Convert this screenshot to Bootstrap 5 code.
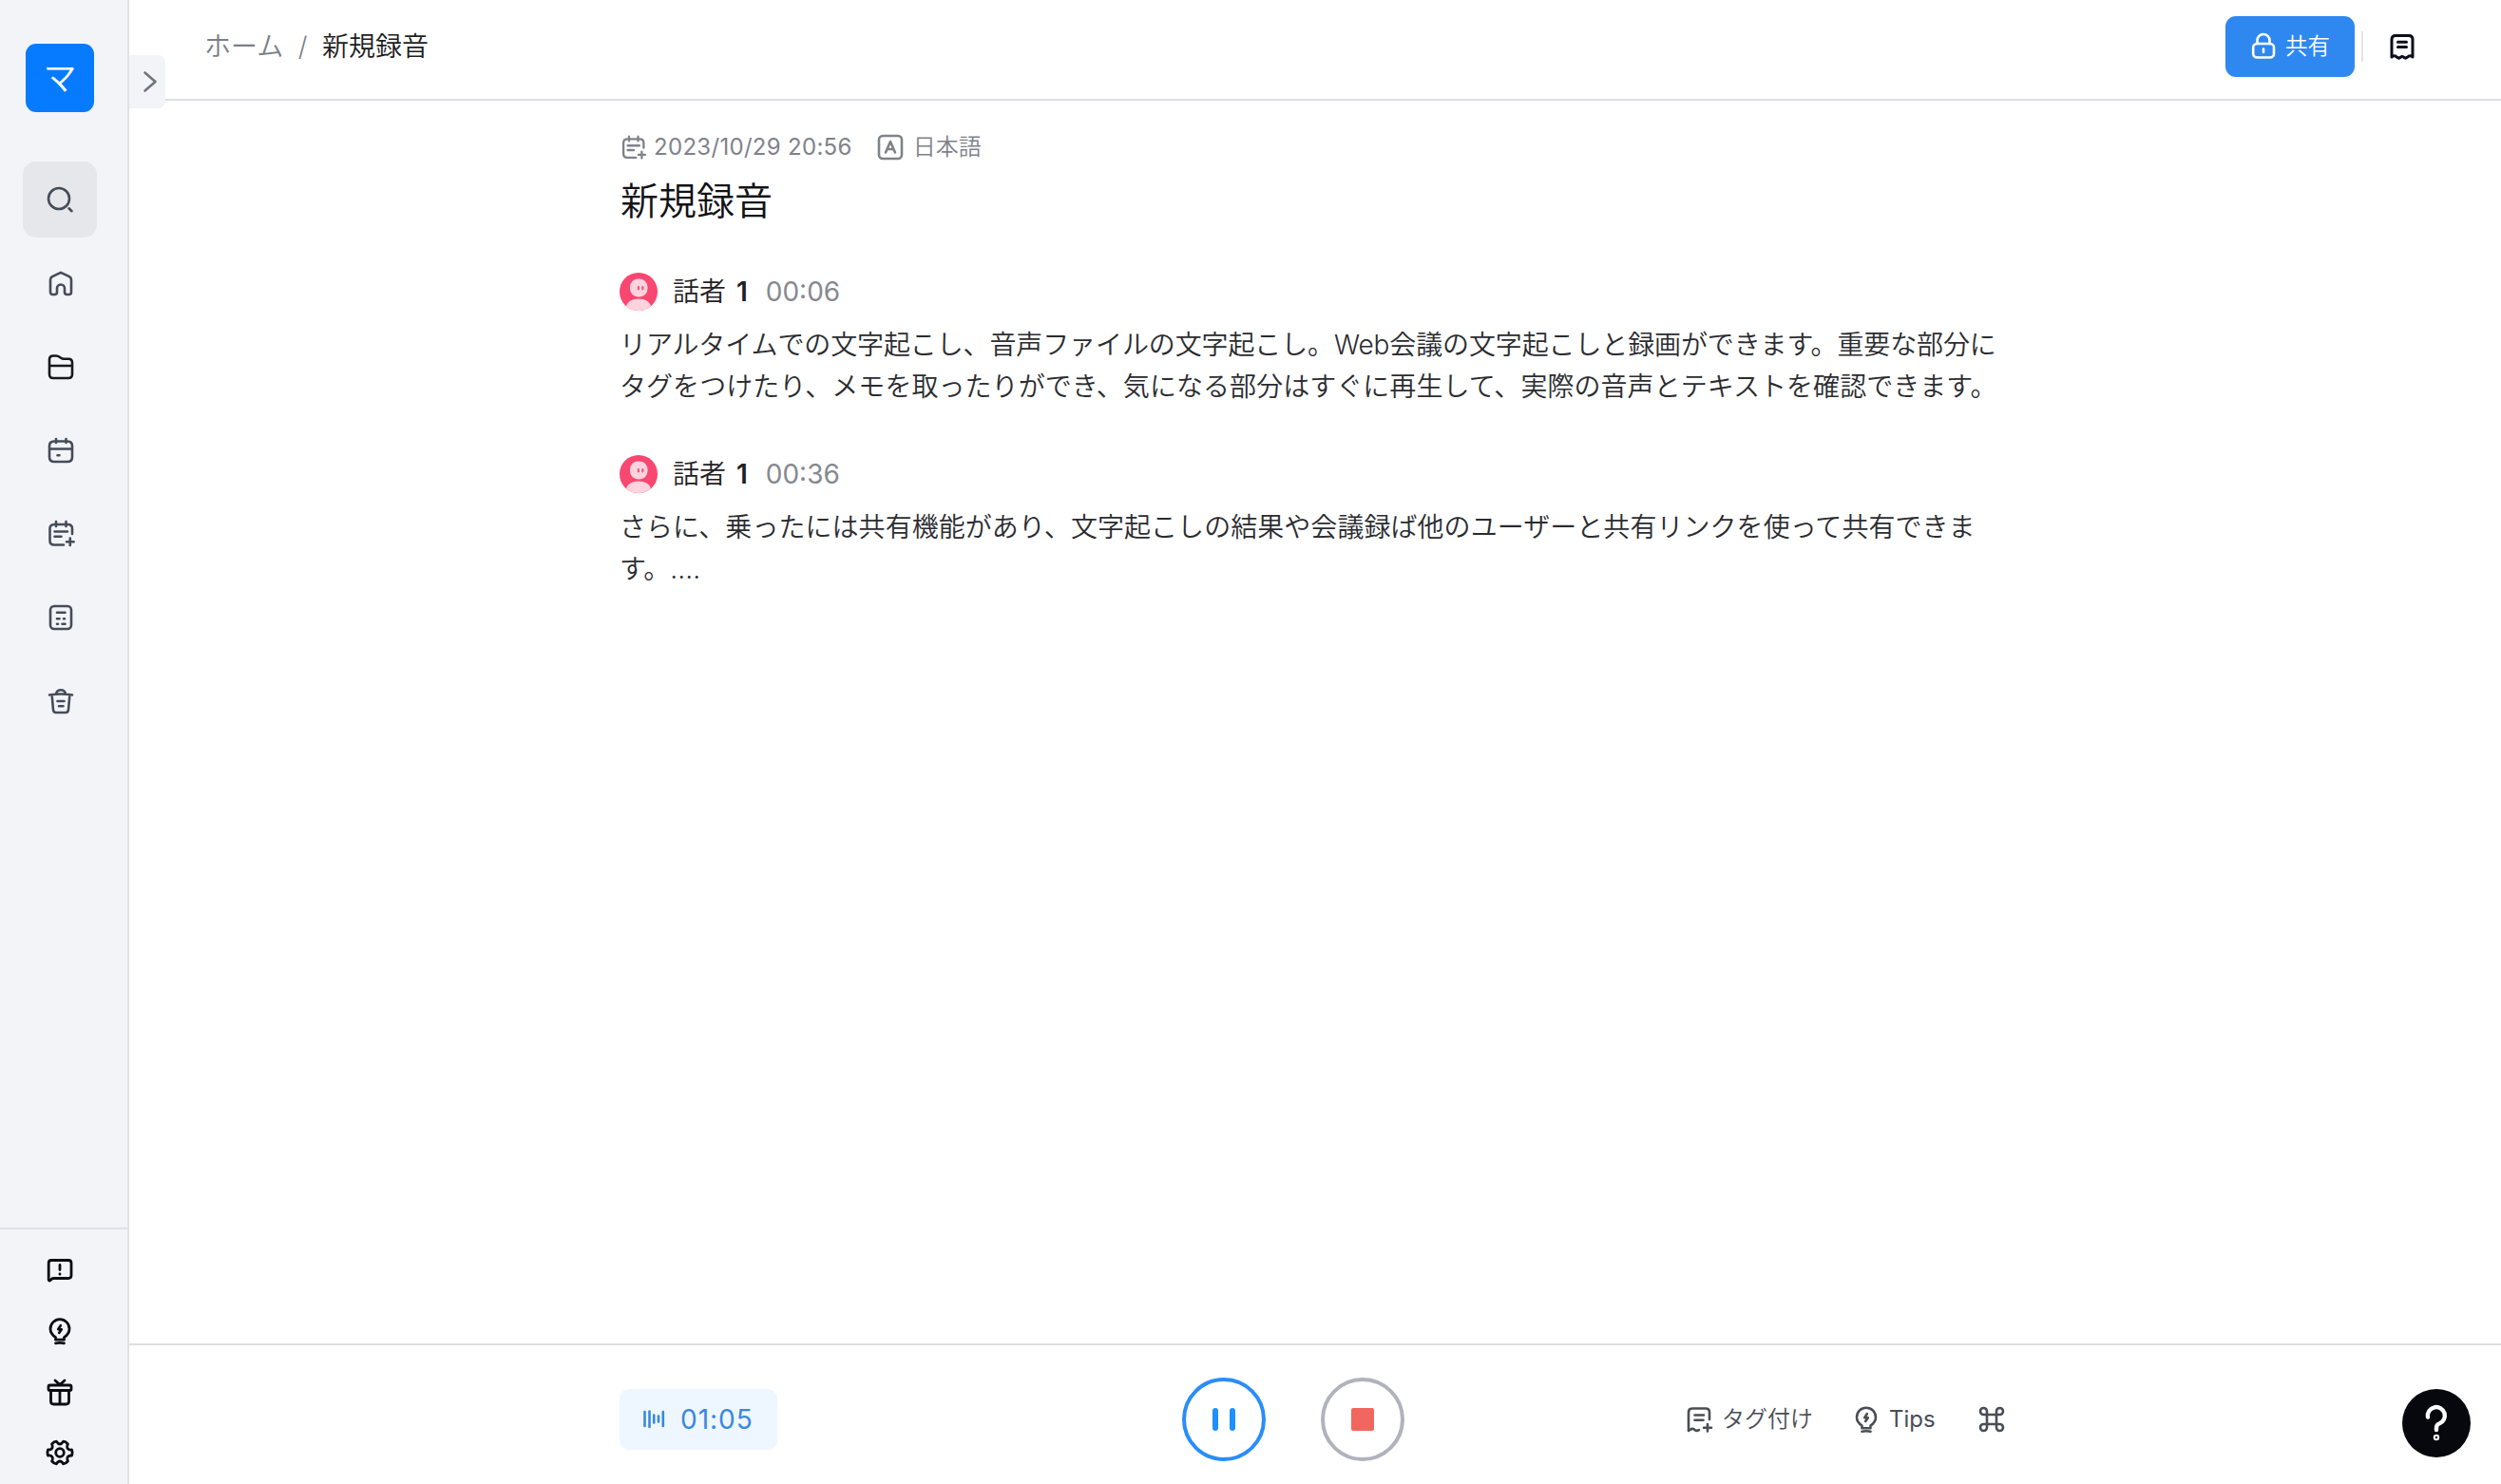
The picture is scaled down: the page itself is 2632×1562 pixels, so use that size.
<!DOCTYPE html>
<html lang="ja">
<head>
    <meta charset="UTF-8">
    <meta name="viewport" content="width=device-width, initial-scale=1.0">
    <title>新規録音</title>
    <link href="https://cdn.jsdelivr.net/npm/bootstrap@5.3.0/dist/css/bootstrap.min.css" rel="stylesheet">
    <style>
        body {
            font-family: Inter, "Noto Sans CJK JP", sans-serif;
            font-size: 28px;
            font-weight: 350;
            line-height: 44px;
            color: #2b2c30;
        }
        svg {
            display: block;
            flex: none;
            fill: none;
            stroke: currentColor;
            stroke-width: 2.6;
            stroke-linecap: round;
            stroke-linejoin: round;
        }
        .latin {
            font-weight: 400;
        }

        /* Sidebar */
        .sidebar {
            width: 136px;
            background: #f2f4f8;
            border-right: 2px solid #dfe1e6;
            color: #454c59;
        }
        .logo {
            width: 72px;
            height: 72px;
            margin: 46px 0 52px 27px;
            border-radius: 11px;
            background: #067bff;
            color: #fff;
            font-size: 35px;
        }
        .side-nav {
            gap: 8px;
            padding-left: 24px;
        }
        .side-link {
            width: 80px;
            height: 80px;
            border-radius: 14px;
            color: inherit;
        }
        .side-link.current {
            width: 78px;
            background: #e6e7eb;
        }
        .side-link.dark {
            color: #17181c;
        }
        .side-foot {
            border-top: 2px solid #dfe1e6;
            height: 270px;
            padding: 27px 0 0 47px;
            gap: 32px;
            color: #0a0c12;
        }
        .side-foot svg {
            stroke-width: 2.8;
        }
        .toggle {
            position: absolute;
            left: 136px;
            top: 58px;
            width: 38px;
            height: 56px;
            border-radius: 0 8px 8px 0;
            background: #f2f4f8;
            color: #6f747d;
        }

        /* Header */
        .topbar {
            height: 106px;
            border-bottom: 2px solid #dedfe2;
            padding: 17px 88px 23px 79px;
        }
        .crumbs {
            --bs-breadcrumb-divider-color: #7c7f87;
            --bs-breadcrumb-item-padding-x: 15.5px;
            --bs-breadcrumb-item-active-color: #1c1d21;
        }
        .crumbs a {
            color: #7c7f87;
        }
        .btn-share {
            --bs-btn-bg: #2f88f0;
            --bs-btn-border-width: 0;
            --bs-btn-color: #fff;
            width: 136px;
            height: 64px;
            border-radius: 11px;
            font-size: 23.5px;
            font-weight: 350;
            gap: 7px;
            padding: 0 0 0 24px;
        }
        .bar-line {
            width: 2px;
            height: 32px;
            margin: 0 25px 0 7px;
            background: #e4e5e7;
        }
        .note-icon {
            color: #0c0e1a;
            stroke-width: 3;
        }

        /* Transcript */
        .column {
            width: 1464px;
            margin-left: 516px;
        }
        .meta {
            height: 44px;
            margin-top: 27px;
            font-size: 24px;
            color: #7f828a;
        }
        .meta .latin {
            margin-left: 7px;
            letter-spacing: .3px;
        }
        .title {
            font-size: 40px;
            font-weight: 350;
            line-height: 60px;
            margin: 5px 0 45px 1px;
            color: #111216;
        }
        .speaker {
            height: 40px;
            margin-bottom: 14px;
            color: #1f2024;
        }
        .speaker-no {
            margin-left: 3px;
            font-weight: 600;
        }
        .time {
            margin-left: 19px;
            color: #868990;
        }
        .speech {
            margin-bottom: 50px;
            white-space: nowrap;
            letter-spacing: .05px;
        }
        .snug {
            letter-spacing: -.12px;
        }

        /* Recorder */
        .recorder {
            height: 148px;
            border-top: 2px solid #dedfe2;
            padding-top: 10px;
        }
        .timer {
            width: 166px;
            height: 64px;
            border-radius: 10px;
            padding-left: 20px;
            gap: 12px;
            background: #eef7ff;
            color: #3a87e0;
            letter-spacing: 1px;
        }
        .round-btn {
            width: 88px;
            height: 88px;
            border: 4px solid #b0b3bc;
        }
        .pause-btn {
            border-color: #2a8dfa;
            gap: 12px;
            margin: 0 58px 0 426px;
        }
        .pause-btn span {
            width: 6px;
            height: 24px;
            border-radius: 3px;
            background: #1e90ff;
        }
        .stop-btn span {
            width: 24px;
            height: 24px;
            border-radius: 2px;
            background: #f26660;
        }
        .tools {
            margin-left: 294px;
            font-size: 24px;
            color: #4a4d55;
        }
        .tips-icon {
            margin-left: 40px;
        }
        .cmd-icon {
            margin-left: 43px;
        }
        .help {
            position: absolute;
            left: 2528px;
            top: 1462px;
            width: 72px;
            height: 72px;
            background: #06080e;
            color: #fff;
        }
        .help svg {
            stroke-width: 4.4;
        }
    </style>
</head>
<body>
    <!-- Shapes used more than once -->
    <svg width="0" height="0" class="position-absolute">
        <symbol id="calendarPlus" viewBox="0 0 32 32">
            <path d="M28 16V10.5Q28 6 23.500 6H9Q4.500 6 4.500 10.500V23Q4.500 27.500 9 27.500H19M11 3V8M21.500 3V8M9.500 13.500H23M9.500 18.800H16.500M25.800 20.500V28M22 24.200H29.600"/>
        </symbol>
        <symbol id="bulb" viewBox="0 0 32 32">
            <path d="M11.500 25.200V22.600C8.500 20.500 6 18 6 13.700A10 10 0 0 1 26 13.700C26 18 23.500 20.500 20.500 22.600V25.200ZM11.500 28.800Q16 27.800 20.500 28.800"/>
            <path d="M16.800 10.200L14.200 14.200H17.800L15.200 18" stroke-width="2.600"/>
        </symbol>
        <symbol id="avatar" viewBox="0 0 40 40">
            <g stroke="none">
                <circle cx="20" cy="20" r="20" fill="#f84770"/>
                <path d="M7 35.200C8.500 30.500 13 27.600 20 27.600S31.500 30.500 33 35.200A20 20 0 0 1 7 35.200Z" fill="#ffd3dd"/>
                <rect x="11" y="6.500" width="18.500" height="19" rx="8.500" fill="#ffd3dd"/>
                <rect x="18.800" y="14" width="2.200" height="4.400" rx="1.100" fill="#f0567b"/>
                <rect x="23.200" y="14" width="2.200" height="4.400" rx="1.100" fill="#f0567b"/>
            </g>
        </symbol>
    </svg>

    <div class="d-flex vh-100 overflow-hidden">
        <aside class="sidebar d-flex flex-column flex-shrink-0">
            <div class="logo d-flex align-items-center justify-content-center">マ</div>
            <nav class="side-nav d-flex flex-column">
                <a class="side-link current d-flex align-items-center justify-content-center">
                    <svg width="32" height="32"><circle cx="15" cy="15" r="11"/><path d="M25.500 25.300L28.500 28.200"/></svg>
                </a>
                <a class="side-link d-flex align-items-center justify-content-center">
                    <svg width="32" height="32"><path d="M16 4.800L25 9.200Q27 10.300 27 12.500V25.500Q27 28 24.500 28H22.500Q20 28 20 25.500V21.500A4 4 0 0 0 12 21.500V25.500Q12 28 9.500 28H7.500Q5 28 5 25.500V12.500Q5 10.300 7 9.200Z"/></svg>
                </a>
                <a class="side-link dark d-flex align-items-center justify-content-center">
                    <svg width="32" height="32"><path d="M4 15V8.500Q4 4.500 8 4.500H11Q13 4.500 15 6L16.500 7Q17.500 7.700 19 7.700H24Q28 7.700 28 11.700V24Q28 28 24 28H8Q4 28 4 24V15H28"/></svg>
                </a>
                <a class="side-link d-flex align-items-center justify-content-center">
                    <svg width="32" height="32"><path d="M9 6.500H23Q28 6.500 28 11.500V23Q28 28 23 28H9Q4 28 4 23V11.500Q4 6.500 9 6.500ZM4 14.500H28M11 4V8M21.500 4V8M12.500 21.300H14.500"/></svg>
                </a>
                <a class="side-link d-flex align-items-center justify-content-center">
                    <svg width="32" height="32"><use href="#calendarPlus"/></svg>
                </a>
                <a class="side-link d-flex align-items-center justify-content-center">
                    <svg width="32" height="32"><rect x="5" y="4" width="22" height="24" rx="4"/><path d="M12 10.700H20.500M12 17.200H14.500M19 17.200H20M12 22.800H13M17.500 22.800H20.500"/></svg>
                </a>
                <a class="side-link d-flex align-items-center justify-content-center">
                    <svg width="32" height="32"><path d="M4 9.500Q16 7.500 28 9.500M11 8Q12 4.200 16 4.200T21 8M6.800 11.500L8 25Q8.200 28 11 28H21Q23.800 28 24 25L25.200 11.500M12.500 16H19.500M14 21.300H18.500"/></svg>
                </a>
            </nav>
            <div class="side-foot d-flex flex-column mt-auto">
                <svg width="32" height="32"><path d="M7 5.500H25Q28 5.500 28 8.500V21.500Q28 24.500 25 24.500H9.500Q7.500 24.500 6.500 26.200Q5 28 4.200 26V8.500Q4.200 5.500 7 5.500ZM16 10.500V15.500M16 20V20.200"/></svg>
                <svg width="32" height="32"><use href="#bulb"/></svg>
                <svg width="32" height="32"><path d="M5.500 9H26.500Q28 9 28 10.500V13Q28 14.500 26.500 14.500H5.500Q4 14.500 4 13V10.500Q4 9 5.500 9ZM6.500 14.500V26Q6.500 29 9.500 29H22.500Q25.500 29 25.500 26V14.500M16 14.500V29M11 4L16 8.500L21 4"/></svg>
                <svg width="32" height="32"><circle cx="16" cy="16" r="4.300"/><path d="M12.400 4.200Q14.200 7 16 7T19.600 4.200Q22 4.200 24.400 7Q23 10 24.200 11.700T28.500 13Q29.600 16 28.500 19Q25 19.200 24.200 20.700T24.400 25Q22 27.800 19.600 27.800Q18 25 16 25T12.400 27.800Q10 27.800 7.600 25Q9 22 7.800 20.300T3.500 19Q2.400 16 3.500 13Q7 12.800 7.800 11.300T7.600 7Q10 4.200 12.400 4.200Z"/></svg>
            </div>
        </aside>

        <main class="d-flex flex-column flex-grow-1">
            <header class="topbar d-flex align-items-center">
                <ol class="breadcrumb crumbs mb-0 me-auto">
                    <li class="breadcrumb-item"><a class="text-decoration-none">ホーム</a></li>
                    <li class="breadcrumb-item active">新規録音</li>
                </ol>
                <button class="btn btn-share d-flex align-items-center">
                    <svg width="32" height="32"><rect x="5.200" y="13" width="21.800" height="14.500" rx="4"/><path d="M9.500 13V9.500A6.500 6.500 0 0 1 22.500 9.500V13M16 18.500V22"/></svg>
                    共有
                </button>
                <div class="bar-line"></div>
                <svg class="note-icon" width="32" height="32"><path d="M5 27V8.500Q5 4.500 9 4.500H23Q27 4.500 27 8.500V27Q24 24.500 21.500 27.200Q19.500 29 17.500 27.200Q16 25.800 14.500 27.200Q12.500 29 10.500 27.200Q8 24.500 5 27ZM11.500 11.200H20.500M11.500 16.500H20.500"/></svg>
            </header>

            <section class="column flex-grow-1">
                <div class="meta d-flex align-items-center">
                    <svg width="29" height="29"><use href="#calendarPlus"/></svg>
                    <span class="latin">2023/10/29 20:56</span>
                    <svg class="ms-4" width="32" height="32"><rect x="4" y="4" width="24" height="24" rx="4"/><path d="M11 21.500L16 10L21 21.500M12.800 18H19.200"/></svg>
                    <span class="ms-2">日本語</span>
                </div>
                <h1 class="title">新規録音</h1>

                <div class="speaker d-flex align-items-center">
                    <svg width="40" height="40"><use href="#avatar"/></svg>
                    <span class="ms-3">話者 <span class="speaker-no">1</span></span>
                    <span class="time latin">00:06</span>
                </div>
                <p class="speech"><span class="snug">リアルタイムでの文字起こし、音声ファイルの文字起こし。Web会議の文字起こしと録画ができます。重要な部分に</span><br>タグをつけたり、メモを取ったりができ、気になる部分はすぐに再生して、実際の音声とテキストを確認できます。</p>

                <div class="speaker d-flex align-items-center">
                    <svg width="40" height="40"><use href="#avatar"/></svg>
                    <span class="ms-3">話者 <span class="speaker-no">1</span></span>
                    <span class="time latin">00:36</span>
                </div>
                <p class="speech">さらに、乗ったには共有機能があり、文字起こしの結果や会議録ば他のユーザーと共有リンクを使って共有できま<br>す。....</p>
            </section>

            <footer class="recorder">
                <div class="column d-flex align-items-center h-100">
                    <div class="timer latin d-flex align-items-center">
                        <svg width="32" height="32"><path d="M6.500 8V23M11.500 7.500V24M16.200 11.500V19.500M21 12.500V18.500M25.800 8V23"/></svg>
                        <span>01:05</span>
                    </div>
                    <div class="round-btn pause-btn rounded-circle d-flex align-items-center justify-content-center"><span></span><span></span></div>
                    <div class="round-btn stop-btn rounded-circle d-flex align-items-center justify-content-center"><span></span></div>
                    <div class="tools d-flex align-items-center">
                        <svg width="32" height="32"><path d="M27 16V8.500Q27 4.500 23 4.500H9Q5 4.500 5 8.500V28Q8.500 25 10.500 26.200Q13 29 16 27.200M11.500 11.500H21M11.500 16.800H20.500M25 21V28.500M21 24.700H29"/></svg>
                        <span class="ms-2">タグ付け</span>
                        <svg class="tips-icon" width="32" height="32"><use href="#bulb"/></svg>
                        <span class="latin ms-2">Tips</span>
                        <svg class="cmd-icon" width="32" height="32"><path d="M11 11H21V21H11ZM11 11V7.500A3.500 3.500 0 1 0 7.500 11H11M21 11H24.500A3.500 3.500 0 1 0 21 7.500V11M21 21V24.500A3.500 3.500 0 1 0 24.500 21H21M11 21H7.500A3.500 3.500 0 1 0 11 24.500V21"/></svg>
                    </div>
                </div>
            </footer>
        </main>
    </div>

    <div class="toggle d-flex align-items-center justify-content-center">
        <svg width="32" height="32"><path d="M13.500 6.500L24.500 16L13.500 25.500"/></svg>
    </div>
    <div class="help rounded-circle d-flex align-items-center justify-content-center">
        <svg width="40" height="40"><path d="M11 13.500A9 9 0 1 1 23 20.500Q20 21.500 20 25V27"/><circle cx="20" cy="35" r="1"/></svg>
    </div>

    <script src="https://cdn.jsdelivr.net/npm/bootstrap@5.3.0/dist/js/bootstrap.bundle.min.js"></script>
</body>
</html>
